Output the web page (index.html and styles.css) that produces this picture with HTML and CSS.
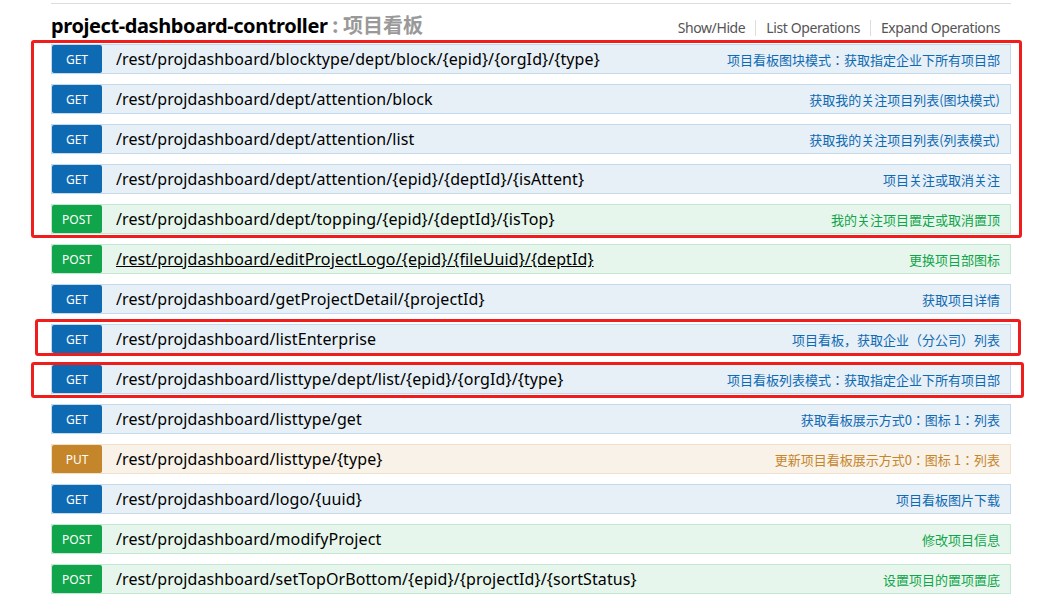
FILE: index.html
```html
<!DOCTYPE html>
<html>
<head>
<meta charset="utf-8">
<link rel="stylesheet" href="styles.css">
</head>
<body>
<div class="page">
  <div class="heading">
    <h2 class="title"><span class="name">project-dashboard-controller</span><span class="desc"> : 项目看板</span></h2>
    <ul class="options">
      <li>Show/Hide</li>
      <li>List Operations</li>
      <li>Expand Operations</li>
    </ul>
  </div>
  <ul class="endpoints">
    <li class="op get"><span class="method">GET</span><span class="path">/rest/projdashboard/blocktype/dept/block/{epid}/{orgId}/{type}</span><span class="summary">项目看板图块模式：获取指定企业下所有项目部</span></li>
    <li class="op get"><span class="method">GET</span><span class="path">/rest/projdashboard/dept/attention/block</span><span class="summary">获取我的关注项目列表(图块模式)</span></li>
    <li class="op get"><span class="method">GET</span><span class="path">/rest/projdashboard/dept/attention/list</span><span class="summary">获取我的关注项目列表(列表模式)</span></li>
    <li class="op get"><span class="method">GET</span><span class="path">/rest/projdashboard/dept/attention/{epid}/{deptId}/{isAttent}</span><span class="summary">项目关注或取消关注</span></li>
    <li class="op post"><span class="method">POST</span><span class="path">/rest/projdashboard/dept/topping/{epid}/{deptId}/{isTop}</span><span class="summary">我的关注项目置定或取消置顶</span></li>
    <li class="op post"><span class="method">POST</span><span class="path hover">/rest/projdashboard/editProjectLogo/{epid}/{fileUuid}/{deptId}</span><span class="summary">更换项目部图标</span></li>
    <li class="op get"><span class="method">GET</span><span class="path">/rest/projdashboard/getProjectDetail/{projectId}</span><span class="summary">获取项目详情</span></li>
    <li class="op get"><span class="method">GET</span><span class="path">/rest/projdashboard/listEnterprise</span><span class="summary">项目看板，获取企业（分公司）列表</span></li>
    <li class="op get"><span class="method">GET</span><span class="path">/rest/projdashboard/listtype/dept/list/{epid}/{orgId}/{type}</span><span class="summary">项目看板列表模式：获取指定企业下所有项目部</span></li>
    <li class="op get"><span class="method">GET</span><span class="path">/rest/projdashboard/listtype/get</span><span class="summary">获取看板展示方式0：图标 1：列表</span></li>
    <li class="op put"><span class="method">PUT</span><span class="path">/rest/projdashboard/listtype/{type}</span><span class="summary">更新项目看板展示方式0：图标 1：列表</span></li>
    <li class="op get"><span class="method">GET</span><span class="path">/rest/projdashboard/logo/{uuid}</span><span class="summary">项目看板图片下载</span></li>
    <li class="op post"><span class="method">POST</span><span class="path">/rest/projdashboard/modifyProject</span><span class="summary">修改项目信息</span></li>
    <li class="op post"><span class="method">POST</span><span class="path">/rest/projdashboard/setTopOrBottom/{epid}/{projectId}/{sortStatus}</span><span class="summary">设置项目的置项置底</span></li>
  </ul>
</div>
<div class="mark mark-a"></div>
<div class="mark mark-b"></div>
<div class="mark mark-c"></div>
</body>
</html>
```

FILE: styles.css
```css
html, body {
  margin: 0;
  padding: 0;
  background: #fff;
}
body {
  font-family: "Open Sans", "Noto Sans CJK SC", sans-serif;
  color: #000;
}
.page {
  margin: 3px 0 0 51px;
  width: 960px;
  border-top: 1px solid #ddd;
}
.heading {
  display: flex;
  align-items: flex-end;
  justify-content: space-between;
  height: 40px;
}
.title {
  margin: 0 0 6px 0;
  font-size: 20px;
  font-weight: bold;
  line-height: 24px;
  font-family: "Noto Sans", "Noto Sans CJK SC", sans-serif;
  letter-spacing: -0.4px;
}
.title .name { color: #000; }
.title .desc { color: #999; font-family: "Noto Sans CJK SC", sans-serif; font-weight: bold; letter-spacing: 0; }
.options {
  list-style: none;
  margin: 0 11px 8px 0;
  padding: 0;
  display: flex;
  font-size: 14px;
  line-height: 16px;
  color: #555;
  font-family: "Noto Sans", sans-serif;
  letter-spacing: -0.4px;
}
.options li {
  padding: 0 10px;
  border-left: 1px solid #ddd;
}
.options li:first-child { border-left: none; }
.options li:last-child { padding-right: 0; }
.endpoints {
  list-style: none;
  margin: 0;
  padding: 0;
  display: flex;
  flex-direction: column;
  gap: 10px;
}
.op {
  display: flex;
  align-items: center;
  height: 28px;
  border: 1px solid;
}
.method {
  flex: none;
  width: 50px;
  height: 28px;
  line-height: 30px;
  text-align: center;
  color: #fff;
  font-size: 12px;
  border-radius: 2px;
  font-family: "Noto Sans", sans-serif;
}
.path {
  flex: 1;
  padding-left: 14px;
  font-size: 16px;
  font-family: "Noto Sans", sans-serif;
  letter-spacing: 0.1px;
  color: #000;
  white-space: nowrap;
}
.path.hover { text-decoration: underline; }
.summary {
  padding-right: 10px;
  font-size: 13px;
  font-family: "Noto Sans CJK JP", "Noto Sans CJK SC", sans-serif;
  white-space: nowrap;
}
.get { background: #e7f0f7; border-color: #c3d9ec; }
.get .method { background: #0f6ab4; }
.get .summary { color: #0f6ab4; }
.post { background: #e7f6ec; border-color: #c3e8d1; }
.post .method { background: #10a54a; }
.post .summary { color: #10a54a; }
.put { background: #f9f2e9; border-color: #f0e0ca; }
.put .method { background: #c5862b; }
.put .summary { color: #c5862b; }
.mark {
  position: absolute;
  border: 3px solid #f01d1d;
  border-radius: 3px;
  box-sizing: border-box;
}
.mark-a { left: 31px; top: 40px; width: 991px; height: 198px; }
.mark-b { left: 35px; top: 319px; width: 986px; height: 37px; }
.mark-c { left: 31px; top: 362px; width: 993px; height: 36px; }
```
